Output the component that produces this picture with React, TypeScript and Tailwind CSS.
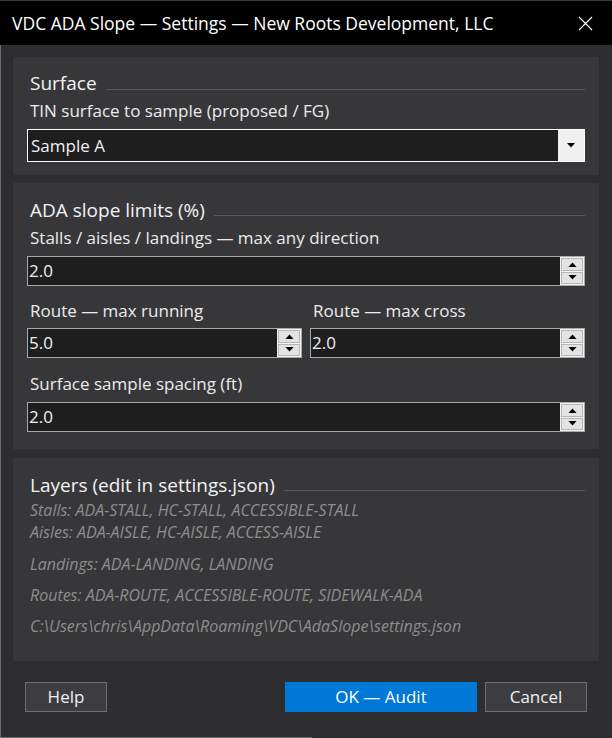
import React from "react";

const font = { fontFamily: '"Open Sans", "Noto Sans", sans-serif' };

function Up() {
  return (
    <svg width="9" height="5" viewBox="0 0 9 5">
      <polygon points="0.5,5 8.5,5 4.5,0.5" fill="#000" />
    </svg>
  );
}
function Down() {
  return (
    <svg width="9" height="5" viewBox="0 0 9 5">
      <polygon points="0.5,0 8.5,0 4.5,4.5" fill="#000" />
    </svg>
  );
}

function Spin({ value }: { value: string }) {
  return (
    <div className="h-[30px] flex bg-[#1e1e1e] border border-[#a9a9a9]">
      <div className="flex-1 flex items-center pl-[1px] text-[17px] text-[#f0f0f0]">{value}</div>
      <div className="w-[24px] flex flex-col p-[1px] gap-[1px] bg-[#f4f4f4]">
        <div className="flex-1 flex items-center justify-center bg-[#e3e3e3] border border-[#b5b5b5]">
          <Up />
        </div>
        <div className="flex-1 flex items-center justify-center bg-[#e3e3e3] border border-[#b5b5b5]">
          <Down />
        </div>
      </div>
    </div>
  );
}

function Heading({ text, lineTop }: { text: string; lineTop: string }) {
  return (
    <div className="h-[24px] flex items-start">
      <span className="pl-[3px] leading-[24px] text-[19px] text-[#f2f2f2] whitespace-nowrap">{text}</span>
      <div className={`flex-1 h-px bg-[#58585c] ml-[9px] ${lineTop}`} />
    </div>
  );
}

function Label({ text, mt }: { text: string; mt: string }) {
  return (
    <div className={`h-[24px] leading-[24px] pl-[3px] text-[17px] text-[#ececec] whitespace-nowrap ${mt}`}>{text}</div>
  );
}

function Note({ text, mt }: { text: string; mt: string }) {
  return (
    <div className={`h-[22px] leading-[22px] pl-[3px] text-[16px] italic text-[#8e8e8e] whitespace-nowrap ${mt}`}>{text}</div>
  );
}

export default function App() {
  return (
    <div style={font} className="w-[612px] h-[738px] bg-[#2d2d30] flex flex-col relative overflow-hidden">
      {/* Title bar */}
      <div className="h-[45px] bg-black flex items-center justify-between pl-[12px] pr-[19px] border-t border-[#3a3a3a]">
        <span className="text-[17.5px] text-white whitespace-nowrap">VDC ADA Slope — Settings — New Roots Development, LLC</span>
        <svg width="15" height="15" viewBox="0 0 15 15">
          <path d="M1 1 L14 14 M14 1 L1 14" stroke="#ffffff" strokeWidth="1.2" fill="none" />
        </svg>
      </div>

      <div className="flex-1 flex flex-col border-l border-[#6e6e6e] pl-[12px] pr-[13px] pt-[12px]">
        {/* Surface panel */}
        <div className="bg-[#37373a] px-[14px] pt-[14px] pb-[13px] flex flex-col">
          <Heading text="Surface" lineTop="mt-[18px]" />
          <Label text="TIN surface to sample (proposed / FG)" mt="mt-[4px]" />
          <div className="mt-[6px] h-[33px] flex border border-white bg-[#1e1e1e]">
            <div className="flex-1 flex items-center pl-[3px] text-[17px] text-[#f0f0f0]">Sample A</div>
            <div className="w-[26px] bg-[#efefef] flex items-center justify-center">
              <svg width="8" height="5" viewBox="0 0 8 5">
                <polygon points="0,0 8,0 4,4.5" fill="#000" />
              </svg>
            </div>
          </div>
        </div>

        {/* ADA slope limits panel */}
        <div className="mt-[8px] bg-[#37373a] px-[14px] pt-[15px] pb-[17px] flex flex-col">
          <Heading text="ADA slope limits (%)" lineTop="mt-[17px]" />
          <Label text="Stalls / aisles / landings — max any direction" mt="mt-[4px]" />
          <div className="mt-[6px]">
            <Spin value="2.0" />
          </div>
          <div className="mt-[13px] grid grid-cols-2 gap-x-[8px]">
            <Label text="Route — max running" mt="mt-0" />
            <Label text="Route — max cross" mt="mt-0" />
            <div className="mt-[5px]">
              <Spin value="5.0" />
            </div>
            <div className="mt-[5px]">
              <Spin value="2.0" />
            </div>
          </div>
          <Label text="Surface sample spacing (ft)" mt="mt-[14px]" />
          <div className="mt-[6px]">
            <Spin value="2.0" />
          </div>
        </div>

        {/* Layers panel */}
        <div className="mt-[9px] bg-[#37373a] px-[14px] pt-[15px] pb-[24px] flex flex-col">
          <Heading text="Layers (edit in settings.json)" lineTop="mt-[17px]" />
          <Note text="Stalls: ADA-STALL, HC-STALL, ACCESSIBLE-STALL" mt="mt-[2px]" />
          <Note text="Aisles: ADA-AISLE, HC-AISLE, ACCESS-AISLE" mt="mt-0" />
          <Note text="Landings: ADA-LANDING, LANDING" mt="mt-[10px]" />
          <Note text="Routes: ADA-ROUTE, ACCESSIBLE-ROUTE, SIDEWALK-ADA" mt="mt-[9px]" />
          <Note text="C:\Users\chris\AppData\Roaming\VDC\AdaSlope\settings.json" mt="mt-[9px]" />
        </div>

        {/* Buttons */}
        <div className="mt-[21px] flex items-center pl-[12px] pr-[12px]">
          <button className="w-[82px] h-[30px] bg-[#3d3d41] border border-[#6e6e6e] text-[17px] text-[#f0f0f0]">Help</button>
          <div className="flex-1" />
          <button className="w-[192px] h-[30px] bg-[#0078d7] text-[17px] text-white">OK — Audit</button>
          <button className="ml-[8px] w-[102px] h-[30px] bg-[#3d3d41] border border-[#6e6e6e] text-[17px] text-[#f0f0f0]">Cancel</button>
        </div>
      </div>
      <div className="absolute left-0 bottom-0 w-[312px] h-px bg-[#6e6e6e]" />
    </div>
  );
}
